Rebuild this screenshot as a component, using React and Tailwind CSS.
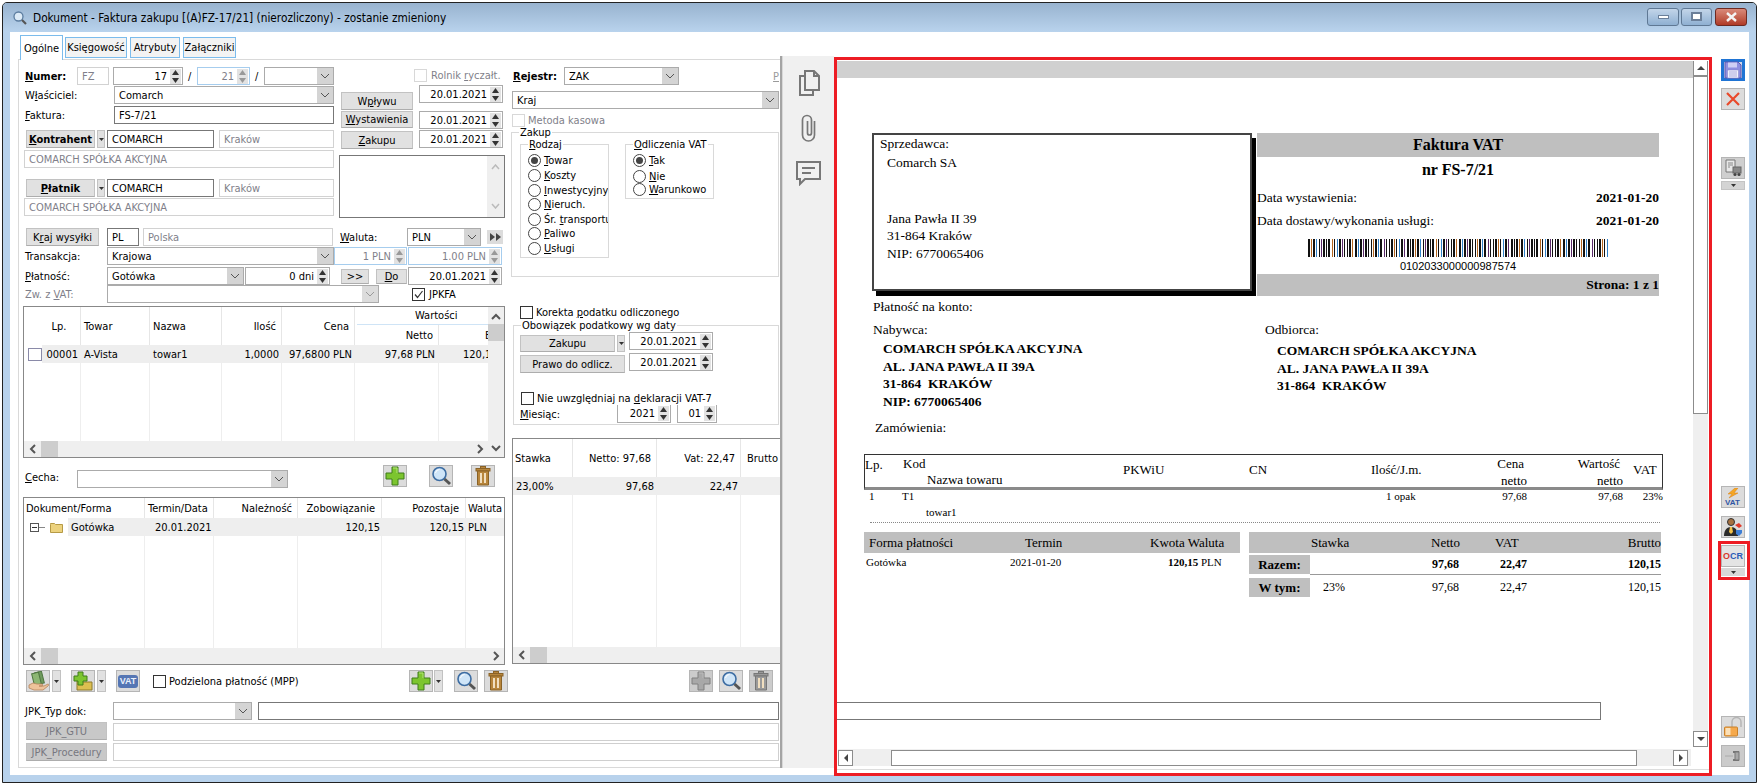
import React from "react";

const cx = (...a) => a.filter(Boolean).join(" ");

function Chev({ dim }) {
  return (
    <svg width="10" height="6" viewBox="0 0 10 6" className="shrink-0">
      <path d="M1 1l4 4 4-4" fill="none" stroke={dim ? "#9a9a9a" : "#555"} strokeWidth="1" />
    </svg>
  );
}
function SpinArrows({ dim }) {
  const c = dim ? "#999" : "#333";
  return (
    <div className="w-[11px] h-[15px] bg-[#e2e2e2] flex flex-col items-center justify-between py-[1px] shrink-0">
      <svg width="7" height="5" viewBox="0 0 7 5"><path d="M3.5 0L7 5H0z" fill={c} /></svg>
      <svg width="7" height="5" viewBox="0 0 7 5"><path d="M3.5 5L7 0H0z" fill={c} /></svg>
    </div>
  );
}
function Box({ className, children, dark, light, blue, right, gray }) {
  const b = dark ? "border-[#777777]" : light ? "border-[#d2d2d2]" : blue ? "border-[#a6cdee]" : "border-[#ababab]";
  return (
    <div className={cx("h-[18px] border bg-white flex items-center px-[4px] shrink-0 overflow-hidden whitespace-nowrap", b, right && "justify-end", gray && "text-[#7f7f8a]", className)}>
      {children}
    </div>
  );
}
function Combo({ className, children, dim }) {
  return (
    <div className={cx("h-[18px] border border-[#ababab] bg-white flex items-center pl-[4px] shrink-0 whitespace-nowrap", className)}>
      <span className="flex-1 overflow-hidden">{children}</span>
      <div className={cx("w-[16px] h-[16px] flex items-center justify-center", dim ? "bg-[#dcdcdc]" : "bg-[#d4d4d4]")}>
        <Chev dim={dim} />
      </div>
    </div>
  );
}
function Spin({ className, children, dim, blue, noTop }) {
  return (
    <div className={cx("h-[18px] border bg-white flex items-center justify-end pr-[1px] shrink-0 whitespace-nowrap", blue ? "border-[#a6cdee]" : "border-[#ababab]", noTop && "border-t-0", dim && "text-[#7f7f8a]", className)}>
      <span className="mr-[3px]">{children}</span>
      <SpinArrows dim={dim} />
    </div>
  );
}
function Btn({ className, children }) {
  return (
    <div className={cx("h-[18px] bg-[#e1e1e1] border border-[#c2c2c2] border-b-[#adadad] flex items-center justify-center shrink-0 whitespace-nowrap", className)}>
      {children}
    </div>
  );
}
function DD({ className }) {
  return (
    <div className={cx("h-[18px] w-[8px] bg-[#e1e1e1] border border-[#c2c2c2] flex items-center justify-center shrink-0", className)}>
      <svg width="5" height="3" viewBox="0 0 5 3"><path d="M0 0h5L2.5 3z" fill="#333" /></svg>
    </div>
  );
}
function Check({ className, on, light }) {
  return (
    <div className={cx("w-[13px] h-[13px] border bg-white flex items-center justify-center shrink-0", light ? "border-[#d8d8d8]" : "border-[#333333]", className)}>
      {on && (
        <svg width="11" height="11" viewBox="0 0 11 11"><path d="M2 5.5l2.5 3L9.5 2" fill="none" stroke="#333" strokeWidth="1.2" /></svg>
      )}
    </div>
  );
}
function Radio({ on, children, className }) {
  return (
    <div className={cx("flex items-center h-[14px] whitespace-nowrap", className)}>
      <div className="w-[13px] h-[13px] rounded-full border border-[#444444] bg-white flex items-center justify-center shrink-0">
        {on && <div className="w-[7px] h-[7px] rounded-full bg-[#444444]" />}
      </div>
      <span className="ml-[3px]">{children}</span>
    </div>
  );
}
function IconBtn({ className, children }) {
  return (
    <div className={cx("w-[24px] h-[22px] bg-[#dcdcdc] border border-[#b5b5b5] flex items-center justify-center shrink-0", className)}>
      {children}
    </div>
  );
}
const Plus = ({ gray }) => (
  <svg width="20" height="20" viewBox="0 0 20 20"><path d="M7 1h6v6h6v6h-6v6H7v-6H1V7h6z" fill={gray ? "#a8a8a8" : "#7cc52f"} stroke={gray ? "#808080" : "#3f7d1a"} strokeWidth="1" /><path d="M8 2h4v5" fill="none" stroke={gray ? "#bbb" : "#b6e67a"} /></svg>
);
const Search = () => (
  <svg width="21" height="20" viewBox="0 0 21 20"><circle cx="8.5" cy="8" r="6.5" fill="#cfe5f8" stroke="#3d6da3" strokeWidth="1.6" /><path d="M4.5 7a4 4 0 0 1 4-3.5" stroke="#fff" fill="none" /><path d="M13.5 13l5.5 5" stroke="#555" strokeWidth="3" /></svg>
);
const Trash = ({ gray }) => {
  const c = gray ? "#9a9a9a" : "#b8863c";
  const d = gray ? "#777" : "#8a6226";
  return (
    <svg width="16" height="20" viewBox="0 0 16 20"><rect x="5.5" y="0.5" width="5" height="2" fill={c} stroke={d} /><rect x="1" y="2.5" width="14" height="2.5" fill={c} stroke={d} /><path d="M2.5 5h11v14h-11z" fill={c} stroke={d} /><path d="M6 7v10M10 7v10" stroke="#f1dfc0" strokeWidth="2" /></svg>
  );
};
const VatBadge = () => (
  <span className="inline-flex items-center justify-center bg-[#5576b4] text-[#eaf0fb] text-[9px] font-bold h-[13px] w-[20px] rounded-[3px] leading-none [font-family:'Liberation_Sans',sans-serif]">VAT</span>
);

function ScrollH({ className, noArrowRight }) {
  return (
    <div className={cx("h-[16px] bg-[#efefef] flex items-center relative shrink-0", className)}>
      <svg width="8" height="10" viewBox="0 0 8 10" className="ml-[5px] shrink-0"><path d="M6 1L2 5l4 4" fill="none" stroke="#555" strokeWidth="2" /></svg>
      <div className="w-[17px] h-[16px] bg-[#cdcdcd] ml-[4px] shrink-0" />
      <div className="flex-1" />
      {!noArrowRight && <svg width="8" height="10" viewBox="0 0 8 10" className="mr-[4px] shrink-0"><path d="M2 1l4 4-4 4" fill="none" stroke="#555" strokeWidth="2" /></svg>}
    </div>
  );
}

function Legend({ className, children }) {
  return <span className={cx("absolute bg-white px-[1px] leading-none whitespace-nowrap", className)}>{children}</span>;
}

function TopLeft() {
  return (
    <div className="h-[168px] pt-[7px] flex">
      <div className="w-[311px] shrink-0">
        <div className="flex items-center h-[18px]">
          <span className="w-[54px] pl-[2px] font-bold shrink-0"><u>N</u>umer:</span>
          <Box light gray className="w-[32px]">FZ</Box>
          <Spin className="w-[70px] ml-[4px]">17</Spin>
          <span className="w-[14px] pl-[5px] shrink-0">/</span>
          <Spin blue dim className="w-[53px]">21</Spin>
          <span className="w-[14px] pl-[5px] shrink-0">/</span>
          <Combo className="w-[70px]"></Combo>
        </div>
        <div className="flex items-center h-[18px] mt-[1px]">
          <span className="w-[91px] pl-[2px] shrink-0">W<u>ł</u>aściciel:</span>
          <Combo className="w-[220px]">Comarch</Combo>
        </div>
        <div className="flex items-center h-[18px] mt-[2px]">
          <span className="w-[91px] pl-[2px] shrink-0"><u>F</u>aktura:</span>
          <Box dark className="w-[220px]">FS-7/21</Box>
        </div>
        <div className="flex items-center h-[18px] mt-[6px] pl-[3px]">
          <Btn className="w-[69px] font-bold"><span><u>K</u>ontrahent</span></Btn>
          <DD className="ml-[2px]" />
          <Box dark className="w-[107px] ml-[2px]">COMARCH</Box>
          <Box light gray className="w-[115px] ml-[5px]">Kraków</Box>
        </div>
        <Box light gray className="w-[310px] ml-[1px] mt-[2px]">COMARCH SPÓŁKA AKCYJNA</Box>
        <div className="flex items-center h-[18px] mt-[11px] pl-[3px]">
          <Btn className="w-[69px] font-bold"><span><u>P</u>łatnik</span></Btn>
          <DD className="ml-[2px]" />
          <Box dark className="w-[107px] ml-[2px]">COMARCH</Box>
          <Box light gray className="w-[115px] ml-[5px]">Kraków</Box>
        </div>
        <Box light gray className="w-[310px] ml-[1px] mt-[1px]">COMARCH SPÓŁKA AKCYJNA</Box>
      </div>
      <div className="w-[166px] ml-[5px] shrink-0">
        <div className="flex items-center h-[14px] mt-[1px] ml-[75px] text-[#7f7f8a] whitespace-nowrap">
          <Check light />
          <span className="ml-[4px]">Rolnik <u>r</u>yczałt.</span>
        </div>
        <div className="flex mt-[3px] ml-[2px]">
          <div className="w-[72px] shrink-0">
            <Btn className="w-full mt-[7px]"><span>W<u>p</u>ływu</span></Btn>
            <Btn className="w-full mt-[1px] !h-[17px]"><span><u>W</u>ystawienia</span></Btn>
            <Btn className="w-full mt-[3px]"><span><u>Z</u>akupu</span></Btn>
          </div>
          <div className="w-[84px] ml-[6px] shrink-0">
            <Spin className="w-full">20.01.2021</Spin>
            <Spin className="w-full mt-[8px]">20.01.2021</Spin>
            <Spin className="w-full mt-[1px]">20.01.2021</Spin>
          </div>
        </div>
        <div className="h-[63px] mt-[6px] border border-[#777777] bg-white flex justify-end">
          <div className="w-[17px] h-full bg-[#efefef] flex flex-col items-center justify-between py-[8px]">
            <svg width="9" height="6" viewBox="0 0 9 6"><path d="M1 5l3.5-4L8 5" fill="none" stroke="#bbb" strokeWidth="1.5" /></svg>
            <svg width="9" height="6" viewBox="0 0 9 6"><path d="M1 1l3.5 4L8 1" fill="none" stroke="#bbb" strokeWidth="1.5" /></svg>
          </div>
        </div>
      </div>
    </div>
  );
}

function FormRows() {
  return (
    <>
      <div className="flex items-center h-[18px]">
        <Btn className="w-[73px] ml-[3px]"><span>K<u>r</u>aj wysyłki</span></Btn>
        <Box dark className="w-[32px] ml-[8px]">PL</Box>
        <Box light gray className="w-[190px] ml-[4px]">Polska</Box>
        <span className="w-[67px] ml-[7px] shrink-0"><u>W</u>aluta:</span>
        <Combo className="w-[74px]">PLN</Combo>
        <div className="w-[16px] h-[14px] ml-[6px] bg-[#dcdcdc] flex items-center justify-center gap-[1px] shrink-0">
          <svg width="5" height="8" viewBox="0 0 5 8"><path d="M0 0l5 4-5 4z" fill="#444" /></svg>
          <svg width="5" height="8" viewBox="0 0 5 8"><path d="M0 0l5 4-5 4z" fill="#444" /></svg>
        </div>
      </div>
      <div className="flex items-center h-[18px] mt-[1px]">
        <span className="w-[84px] pl-[2px] shrink-0">Transakcja:</span>
        <Combo className="w-[227px]">Krajowa</Combo>
        <Spin blue dim className="w-[73px]">1 PLN</Spin>
        <Spin blue dim className="w-[94px] ml-[1px]">1.00 PLN</Spin>
      </div>
      <div className="flex items-center h-[18px] mt-[2px]">
        <span className="w-[84px] pl-[2px] shrink-0"><u>P</u>łatność:</span>
        <Combo className="w-[137px]">Gotówka</Combo>
        <Spin className="w-[85px] ml-[1px]">0 dni</Spin>
        <Btn className="w-[28px] ml-[11px] !h-[15px]">&gt;&gt;</Btn>
        <Btn className="w-[31px] ml-[7px] !h-[15px]"><u>D</u>o</Btn>
        <Spin className="w-[94px] ml-[1px]">20.01.2021</Spin>
      </div>
      <div className="flex items-center h-[18px]">
        <span className="w-[84px] pl-[2px] shrink-0 text-[#7f7f8a]">Zw. z <u>V</u>AT:</span>
        <Combo dim className="w-[272px]"></Combo>
        <Check on className="ml-[33px]" />
        <span className="ml-[4px]">JPKFA</span>
      </div>
    </>
  );
}

function Col({ className, head, cell, headClass, cellClass, rowH, noFillBorder }) {
  return (
    <div className={cx("flex flex-col shrink-0", className)}>
      <div className={cx("flex items-center shrink-0 border-r border-[#e6e6e6] whitespace-nowrap", headClass)}>{head}</div>
      <div className={cx("flex items-center shrink-0 bg-[#eeeeee] whitespace-nowrap", rowH, cellClass)}>{cell}</div>
      <div className={cx("flex-1", !noFillBorder && "border-r border-[#eeeeee]")} />
    </div>
  );
}

function Grid1() {
  const h = "h-[38px]";
  const r = "h-[18px]";
  return (
    <div className="h-[152px] w-[482px] mt-[3px] border border-[#888888] flex bg-white">
      <div className="w-[464px] flex flex-col shrink-0 overflow-hidden">
        <div className="flex flex-1 min-h-0">
          <div className="w-[57px] flex flex-col shrink-0">
            <div className="h-[38px] border-r border-[#e6e6e6] flex items-center justify-center pl-[14px] shrink-0">Lp.</div>
            <div className="h-[18px] flex items-center shrink-0">
              <div className="w-[14px] h-[13px] ml-[4px] border border-[#8a8aa8] bg-white shrink-0" />
              <div className="flex-1 h-full bg-[#eeeeee] flex items-center justify-end pr-[3px]">00001</div>
            </div>
            <div className="flex-1 border-r border-[#eeeeee]" />
          </div>
          <Col className="w-[69px]" head="Towar" cell="A-Vista" headClass={cx(h, "pl-[3px]")} rowH={r} cellClass="pl-[3px]" />
          <Col className="w-[72px]" head="Nazwa" cell="towar1" headClass={cx(h, "pl-[3px]")} rowH={r} cellClass="pl-[3px]" />
          <Col className="w-[60px]" head="Ilość" cell="1,0000" headClass={cx(h, "justify-end pr-[5px]")} rowH={r} cellClass="justify-end pr-[3px]" />
          <Col className="w-[73px]" head="Cena" cell="97,6800 PLN" headClass={cx(h, "justify-end pr-[5px]")} rowH={r} cellClass="justify-end pr-[3px]" />
          <div className="w-[172px] flex flex-col shrink-0">
            <div className="h-[18px] shrink-0 flex items-center ml-[2px] border-b border-[#cfe4f6] pl-[58px] whitespace-nowrap">Wartości</div>
            <div className="flex flex-1">
              <Col className="w-[84px]" head="Netto" cell="97,68 PLN" headClass="h-[20px] justify-end pr-[5px]" rowH={r} cellClass="justify-end pr-[4px]" />
              <Col className="w-[88px]" head="Brutto" cell="120,15 PLN" headClass="h-[20px] pl-[46px] !border-r-0" rowH={r} cellClass="pl-[24px]" noFillBorder />
            </div>
          </div>
        </div>
        <ScrollH />
      </div>
      <div className="w-[16px] bg-[#efefef] flex flex-col items-center shrink-0">
        <svg width="10" height="7" viewBox="0 0 10 7" className="mt-[6px] shrink-0"><path d="M1 6l4-4 4 4" fill="none" stroke="#555" strokeWidth="2" /></svg>
        <div className="w-[16px] h-[17px] bg-[#cdcdcd] mt-[4px] shrink-0" />
        <div className="flex-1" />
        <svg width="10" height="7" viewBox="0 0 10 7" className="mb-[5px] shrink-0"><path d="M1 1l4 4 4-4" fill="none" stroke="#555" strokeWidth="2" /></svg>
      </div>
    </div>
  );
}

function Grid2() {
  const h = "h-[20px]";
  const r = "h-[18px]";
  return (
    <div className="h-[168px] w-[482px] mt-[9px] border border-[#888888] flex flex-col bg-white overflow-hidden">
      <div className="flex flex-1 min-h-0">
        <div className="w-[121px] flex flex-col shrink-0">
          <div className="h-[20px] border-r border-[#e6e6e6] flex items-center pl-[2px] shrink-0">Dokument/Forma</div>
          <div className="h-[18px] flex items-center shrink-0">
            <div className="w-[9px] h-[9px] ml-[6px] border border-[#555555] flex items-center justify-center shrink-0"><div className="w-[5px] h-[1px] bg-[#333333]" /></div>
            <div className="w-[6px] h-[1px] bg-[#888888] shrink-0" />
            <svg width="13" height="11" viewBox="0 0 13 11" className="ml-[5px] shrink-0"><path d="M0.5 2.5V1.5h4l1 1h7v8h-12z" fill="#ecd27e" stroke="#b69a45" /></svg>
            <div className="flex-1 h-full ml-[5px] bg-[#eeeeee] flex items-center pl-[3px]">Gotówka</div>
          </div>
          <div className="flex-1 border-r border-[#eeeeee]" />
        </div>
        <Col className="w-[69px]" head="Termin/Data" cell="20.01.2021" headClass={cx(h, "pl-[3px]")} rowH={r} cellClass="pl-[10px]" />
        <Col className="w-[84px]" head="Należność" cell="" headClass={cx(h, "justify-end pr-[5px]")} rowH={r} />
        <Col className="w-[84px]" head="Zobowiązanie" cell="120,15" headClass={cx(h, "justify-end pr-[6px]")} rowH={r} cellClass="justify-end pr-[2px]" />
        <Col className="w-[84px]" head="Pozostaje" cell="120,15" headClass={cx(h, "justify-end pr-[6px]")} rowH={r} cellClass="justify-end pr-[2px]" />
        <Col className="w-[40px]" head="Waluta" cell="PLN" headClass={cx(h, "pl-[2px] !border-r-0")} rowH={r} cellClass="pl-[2px]" noFillBorder />
      </div>
      <ScrollH />
    </div>
  );
}

function Grid3() {
  const h = "h-[38px]";
  const r = "h-[18px]";
  return (
    <div className="h-[226px] w-[268px] ml-[1px] mt-[13px] border border-r-0 border-[#888888] flex flex-col bg-white overflow-hidden">
      <div className="flex flex-1 min-h-0">
        <Col className="w-[60px]" head="Stawka" cell="23,00%" headClass={cx(h, "pl-[2px]")} rowH={r} cellClass="pl-[3px]" />
        <Col className="w-[84px]" head="Netto: 97,68" cell="97,68" headClass={cx(h, "justify-end pr-[5px]")} rowH={r} cellClass="justify-end pr-[3px]" />
        <Col className="w-[84px]" head="Vat: 22,47" cell="22,47" headClass={cx(h, "justify-end pr-[5px]")} rowH={r} cellClass="justify-end pr-[3px]" />
        <Col className="w-[40px]" head="Brutto" cell="" headClass={cx(h, "pl-[6px] !border-r-0")} rowH={r} noFillBorder />
      </div>
      <ScrollH noArrowRight />
    </div>
  );
}

function ColA() {
  return (
    <div className="w-[482px] shrink-0">
      <TopLeft />
      <FormRows />
      <Grid1 />
      <div className="flex items-start h-[23px] mt-[7px]">
        <span className="w-[54px] pl-[2px] shrink-0 mt-[7px]"><u>C</u>echa:</span>
        <Combo className="w-[211px] mt-[5px]"></Combo>
        <IconBtn className="ml-[95px]"><Plus /></IconBtn>
        <IconBtn className="ml-[22px]"><Search /></IconBtn>
        <IconBtn className="ml-[18px]"><Trash /></IconBtn>
      </div>
      <Grid2 />
      <div className="flex items-center h-[22px] mt-[5px]">
        <IconBtn className="ml-[3px]">
          <svg width="21" height="20" viewBox="0 0 21 20"><rect x="8" y="1" width="7" height="12" transform="rotate(-14 11 7)" fill="#6f9a5c" stroke="#4f7540" /><rect x="5" y="2" width="7" height="12" transform="rotate(-14 8 8)" fill="#8db673" stroke="#4f7540" /><path d="M1 14l4-2 4 1h5c1 0 1 2 0 2h-3l5 0 4-2c1 0 1 1 0 2l-5 4H6l-5-2z" fill="#eec39a" stroke="#b5835a" strokeWidth=".8" /></svg>
        </IconBtn>
        <DD className="ml-[2px] !w-[9px] !h-[22px]" />
        <IconBtn className="ml-[10px]">
          <svg width="20" height="20" viewBox="0 0 20 20"><path d="M4 9h4l2 2h9v8H4z" fill="#dcbf50" stroke="#8e7a2a" /><path d="M5 1h5v4h4v5h-4v4H5v-4H1V5h4z" fill="#7cc52f" stroke="#3f7d1a" /></svg>
        </IconBtn>
        <DD className="ml-[2px] !w-[9px] !h-[22px]" />
        <IconBtn className="ml-[10px]"><VatBadge /></IconBtn>
        <Check className="ml-[13px]" />
        <span className="w-[126px] ml-[3px] shrink-0 whitespace-nowrap">Podzielona płatność (MPP)</span>
        <IconBtn className="ml-[114px]"><Plus /></IconBtn>
        <DD className="ml-[1px] !w-[9px] !h-[22px]" />
        <IconBtn className="ml-[11px]"><Search /></IconBtn>
        <IconBtn className="ml-[6px]"><Trash /></IconBtn>
      </div>
    </div>
  );
}

function Group({ className, legend, legendClass, children }) {
  return (
    <div className={cx("relative border border-[#d9d9d9] bg-white", className)}>
      <Legend className={legendClass}>{legend}</Legend>
      {children}
    </div>
  );
}

function ColB() {
  return (
    <div className="w-[268px] ml-[6px] shrink-0">
      <div className="flex items-center h-[18px] mt-[7px]">
        <span className="w-[53px] pl-[2px] font-bold shrink-0"><u>R</u>ejestr:</span>
        <Combo className="w-[115px]">ZAK</Combo>
        <span className="ml-auto text-[#9a9a9a] underline">P</span>
      </div>
      <Combo className="w-[267px] ml-[1px] mt-[6px]">Kraj</Combo>
      <div className="flex items-center h-[14px] mt-[4px] ml-[1px] text-[#7f7f8a]">
        <Check light />
        <span className="ml-[3px]">Metoda kasowa</span>
      </div>
      <Group className="w-[268px] h-[145px] mt-[5px] flex items-start" legend="Zakup" legendClass="left-[7px] -top-[6px]">
        <Group className="w-[89px] h-[114px] ml-[8px] mt-[11px]" legend={<span><u>R</u>odzaj</span>} legendClass="left-[7px] -top-[6px]">
          <div className="pt-[8px] pl-[7px] overflow-hidden w-[87px]">
            <Radio on><u>T</u>owar</Radio>
            <Radio className="mt-[1px]"><u>K</u>oszty</Radio>
            <Radio className="mt-[1px]"><u>I</u>nwestycyjny</Radio>
            <Radio><u>N</u>ieruch.</Radio>
            <Radio className="mt-[1px]">Śr. <u>t</u>ransportu</Radio>
            <Radio><u>P</u>aliwo</Radio>
            <Radio className="mt-[1px]"><u>U</u>sługi</Radio>
          </div>
        </Group>
        <Group className="w-[89px] h-[55px] ml-[16px] mt-[11px]" legend={<span><u>O</u>dliczenia VAT</span>} legendClass="left-[7px] -top-[6px]">
          <div className="pt-[8px] pl-[7px]">
            <Radio on><u>T</u>ak</Radio>
            <Radio className="mt-[2px]"><u>N</u>ie</Radio>
            <Radio className="-mt-[1px]"><u>W</u>arunkowo</Radio>
          </div>
        </Group>
      </Group>
      <div className="flex items-center h-[13px] mt-[29px] ml-[9px]">
        <Check />
        <span className="ml-[3px]">Korekta <u>p</u>odatku odliczonego</span>
      </div>
      <Group className="w-[266px] h-[100px] ml-[2px] mt-[6px]" legend="Obowiązek podatkowy wg daty" legendClass="left-[7px] -top-[6px]">
        <div className="flex items-start mt-[6px] ml-[6px] h-[20px]">
          <Btn className="w-[95px] mt-[3px] !h-[17px]">Zakupu</Btn>
          <DD className="ml-[2px] mt-[3px] !h-[17px]" />
          <Spin className="w-[84px] ml-[4px]">20.01.2021</Spin>
        </div>
        <div className="flex items-start mt-[1px] ml-[6px] h-[20px]">
          <Btn className="w-[105px] mt-[2px]">Prawo do odlicz.</Btn>
          <Spin className="w-[84px] ml-[4px]">20.01.2021</Spin>
        </div>
        <div className="flex items-center h-[13px] mt-[19px] ml-[7px]">
          <Check />
          <span className="ml-[3px]">Nie uwzględniaj na <u>d</u>eklaracji VAT-7</span>
        </div>
        <div className="flex items-center h-[18px] ml-[6px]">
          <span className="w-[97px] shrink-0"><u>M</u>iesiąc:</span>
          <Spin noTop className="w-[54px]">2021</Spin>
          <Spin noTop className="w-[40px] ml-[6px]">01</Spin>
        </div>
      </Group>
      <Grid3 />
      <div className="flex items-center h-[22px] mt-[6px] ml-[178px]">
        <IconBtn className="!bg-[#cccccc]"><Plus gray /></IconBtn>
        <IconBtn className="ml-[6px]"><Search /></IconBtn>
        <IconBtn className="ml-[6px] !bg-[#cccccc]"><Trash gray /></IconBtn>
      </div>
    </div>
  );
}

function JpkRows() {
  return (
    <div className="mt-[10px]">
      <div className="flex items-center h-[18px]">
        <span className="w-[90px] pl-[2px] shrink-0">JPK_Typ dok:</span>
        <Combo className="w-[139px]"></Combo>
        <Box dark className="w-[521px] ml-[6px]"></Box>
      </div>
      <div className="flex items-start h-[19px] mt-[2px]">
        <Btn className="w-[81px] ml-[3px] !bg-[#c8c8c8] text-[#77777f]">JPK_GTU</Btn>
        <Box className="w-[666px] ml-[6px] mt-[1px] !border-[#cfcfcf]"></Box>
      </div>
      <div className="flex items-start h-[18px] mt-[2px]">
        <Btn className="w-[81px] ml-[3px] !bg-[#c8c8c8] text-[#77777f]">JPK_Procedury</Btn>
        <Box className="w-[666px] ml-[6px] !border-[#cfcfcf]"></Box>
      </div>
    </div>
  );
}

function LeftSide() {
  return (
    <div className="w-[762px] shrink-0 flex flex-col pt-[3px]">
      <div className="flex items-end h-[24px] pl-[2px]">
        <div className="w-[43px] h-[25px] border border-b-0 border-[#7cbcec] bg-white flex items-center justify-center -mb-[1px] z-10 shrink-0">Ogólne</div>
        <div className="w-[62px] h-[21px] border border-[#7cbcec] bg-[#f3f3f3] flex items-center justify-center ml-[2px] mb-[1px] shrink-0">Księgowość</div>
        <div className="w-[50px] h-[21px] border border-[#7cbcec] bg-[#f3f3f3] flex items-center justify-center ml-[3px] mb-[1px] shrink-0">Atrybuty</div>
        <div className="w-[53px] h-[21px] border border-[#7cbcec] bg-[#f3f3f3] flex items-center justify-center ml-[3px] mb-[1px] shrink-0">Załączniki</div>
      </div>
      <div className="h-[709px] border-l border-t border-b border-[#d9d9d9] pl-[4px]">
        <div className="flex h-[632px]">
          <ColA />
          <ColB />
        </div>
        <JpkRows />
      </div>
    </div>
  );
}

function Barcode() {
  const pattern = [2,1,1,1,2,1,1,2,1,1,1,1,2,1,1,1,2,2,1,1,1,2,1,1,2,1,1,1,1,2,1,1,2,1,1,2,2,1,1,1];
  const colors = ["#111111", "#b5651d", "#111111", "#2f80c8", "#111111", "#5a2a6a", "#111111", "#111111"];
  const bars = [];
  let x = 0;
  let i = 0;
  while (x < 300) {
    const w = pattern[i % pattern.length];
    if (i % 2 === 0) bars.push(<rect key={i} x={x} y="0" width={w} height="18" fill={colors[(i / 2) % colors.length]} />);
    x += w;
    i++;
  }
  return <svg width="300" height="18" viewBox="0 0 300 18" className="mx-auto mt-[9px] block">{bars}</svg>;
}

function DocTop() {
  return (
    <div className="flex pt-[55px]">
      <div className="w-[380px] h-[158px] ml-[35px] border-2 border-[#444444] bg-white shadow-[4px_5px_0_#000] shrink-0 text-[13.5px]">
        <div className="h-[18px] pl-[6px] flex items-center">Sprzedawca:</div>
        <div className="h-[18px] pl-[13px] mt-[1px] flex items-center">Comarch SA</div>
        <div className="h-[17px] pl-[13px] mt-[38px] flex items-center">Jana Pawła II 39</div>
        <div className="h-[17px] pl-[13px] flex items-center">31-864 Kraków</div>
        <div className="h-[17px] pl-[13px] mt-[1px] flex items-center">NIP: 6770065406</div>
      </div>
      <div className="w-[402px] ml-[5px] shrink-0">
        <div className="h-[24px] bg-[#bfbfbf] flex items-center justify-center font-bold text-[16px]">Faktura VAT</div>
        <div className="h-[20px] mt-[3px] flex items-center justify-center font-bold text-[16px]">nr FS-7/21</div>
        <div className="h-[18px] mt-[9px] flex items-center justify-between text-[13.5px]"><span>Data wystawienia:</span><b>2021-01-20</b></div>
        <div className="h-[18px] mt-[5px] flex items-center justify-between text-[13.5px]"><span>Data dostawy/wykonania usługi:</span><b>2021-01-20</b></div>
        <Barcode />
        <div className="h-[14px] mt-[2px] flex items-center justify-center text-[11px] [font-family:'Liberation_Sans',sans-serif]">0102033000000987574</div>
        <div className="h-[22px] mt-[1px] bg-[#bfbfbf] flex items-center justify-end font-bold text-[13.5px]">Strona: 1 z 1</div>
      </div>
    </div>
  );
}

function DocParties() {
  return (
    <div className="text-[13.5px]">
      <div className="h-[18px] mt-[2px] ml-[36px] flex items-center">Płatność na konto:</div>
      <div className="flex mt-[5px]">
        <div className="w-[392px] ml-[36px] shrink-0">
          <div className="h-[18px] flex items-center">Nabywca:</div>
          <div className="pl-[10px] mt-[1px] font-bold">
            <div className="h-[17.5px] flex items-center">COMARCH SPÓŁKA AKCYJNA</div>
            <div className="h-[17.5px] flex items-center">AL. JANA PAWŁA II 39A</div>
            <div className="h-[17.5px] flex items-center whitespace-pre">31-864  KRAKÓW</div>
            <div className="h-[18px] flex items-center">NIP: 6770065406</div>
          </div>
        </div>
        <div className="shrink-0">
          <div className="h-[18px] flex items-center">Odbiorca:</div>
          <div className="pl-[12px] mt-[3px] font-bold">
            <div className="h-[17.5px] flex items-center">COMARCH SPÓŁKA AKCYJNA</div>
            <div className="h-[17.5px] flex items-center">AL. JANA PAWŁA II 39A</div>
            <div className="h-[17.5px] flex items-center whitespace-pre">31-864  KRAKÓW</div>
          </div>
        </div>
      </div>
      <div className="h-[18px] mt-[8px] ml-[38px] flex items-center">Zamówienia:</div>
    </div>
  );
}

function DocTable() {
  return (
    <div className="ml-[27px] w-[799px]">
      <div className="h-[36px] mt-[17px] border border-[#333333] border-b-[3px] border-b-[#8a8a8a] flex text-[13px] whitespace-nowrap">
        <div className="w-[38px] pt-[3px] shrink-0">Lp.</div>
        <div className="w-[220px] shrink-0">
          <div className="h-[18px] flex items-center">Kod</div>
          <div className="h-[14px] flex items-center pl-[24px]">Nazwa towaru</div>
        </div>
        <div className="w-[126px] pt-[8px] shrink-0">PKWiU</div>
        <div className="w-[122px] pt-[8px] shrink-0">CN</div>
        <div className="w-[110px] pt-[8px] shrink-0">Ilość/J.m.</div>
        <div className="w-[46px] text-right shrink-0">
          <div className="h-[18px] flex items-center justify-end pr-[3px]">Cena</div>
          <div className="h-[15px] flex items-center justify-end">netto</div>
        </div>
        <div className="w-[96px] text-right shrink-0">
          <div className="h-[18px] flex items-center justify-end pr-[3px]">Wartość</div>
          <div className="h-[15px] flex items-center justify-end">netto</div>
        </div>
        <div className="pt-[8px] pl-[10px] shrink-0">VAT</div>
      </div>
      <div className="h-[14px] flex items-center text-[11px] whitespace-nowrap">
        <div className="w-[38px] pl-[5px] shrink-0">1</div>
        <div className="w-[358px] shrink-0">T1</div>
        <div className="w-[223px] pl-[126px] shrink-0">1 opak</div>
        <div className="w-[44px] text-right shrink-0">97,68</div>
        <div className="w-[96px] text-right shrink-0">97,68</div>
        <div className="flex-1 text-right">23%</div>
      </div>
      <div className="h-[14px] mt-[2px] flex items-center pl-[62px] text-[11px]">towar1</div>
      <div className="w-[790px] ml-[6px] mt-[2px] border-t border-dotted border-[#888888]" />
    </div>
  );
}

function DocBottom() {
  return (
    <div className="flex ml-[27px] mt-[9px] whitespace-nowrap">
      <div className="w-[376px] shrink-0">
        <div className="h-[21px] bg-[#bfbfbf] flex items-center text-[13px]">
          <span className="w-[161px] pl-[5px] shrink-0">Forma płatności</span>
          <span className="w-[125px] shrink-0">Termin</span>
          <span>Kwota Waluta</span>
        </div>
        <div className="h-[14px] mt-[3px] flex items-center text-[11px]">
          <span className="w-[146px] pl-[2px] shrink-0">Gotówka</span>
          <span className="w-[158px] shrink-0">2021-01-20</span>
          <span><b>120,15</b> PLN</span>
        </div>
      </div>
      <div className="w-[412px] ml-[9px] shrink-0 text-[13px]">
        <div className="h-[21px] bg-[#bfbfbf] flex items-center">
          <span className="w-[182px] pl-[62px] shrink-0">Stawka</span>
          <span className="w-[64px] shrink-0">Netto</span>
          <span className="flex-1">VAT</span>
          <span>Brutto</span>
        </div>
        <div className="flex h-[20px] mt-[2px] font-bold text-[12px]">
          <div className="w-[61px] h-[19px] bg-[#bfbfbf] flex items-center justify-center shrink-0 text-[13px]">Razem:</div>
          <div className="flex-1 flex items-center border-b border-[#999999]">
            <span className="w-[149px] text-right shrink-0">97,68</span>
            <span className="w-[68px] text-right shrink-0">22,47</span>
            <span className="flex-1 text-right">120,15</span>
          </div>
        </div>
        <div className="flex h-[19px] mt-[3px] text-[12px]">
          <div className="w-[61px] bg-[#bfbfbf] flex items-center justify-center font-bold shrink-0 text-[13px]">W tym:</div>
          <div className="flex-1 flex items-center">
            <span className="w-[35px] text-right shrink-0">23%</span>
            <span className="w-[114px] text-right shrink-0">97,68</span>
            <span className="w-[68px] text-right shrink-0">22,47</span>
            <span className="flex-1 text-right">120,15</span>
          </div>
        </div>
      </div>
    </div>
  );
}

function ScrollBtn({ children, className }) {
  return <div className={cx("w-[15px] h-[16px] bg-white border border-[#8c8c8c] flex items-center justify-center shrink-0", className)}>{children}</div>;
}

function Viewer() {
  return (
    <div className="w-[878px] h-[719px] mt-[25px] border-[3px] border-[#ed1c24] shrink-0 relative overflow-hidden bg-white flex flex-col">
      <div className="flex h-[686px] shrink-0">
        <div className="w-[856px] h-full shrink-0 overflow-hidden [font-family:'Liberation_Serif',serif] text-[13.5px] leading-none text-black">
          <div className="h-[17px] mt-[1px] bg-[#d0d0d0]" />
          <DocTop />
          <DocParties />
          <DocTable />
          <DocBottom />
        </div>
        <div className="w-[15px] h-full mt-[1px] flex flex-col bg-[#efefef] shrink-0">
          <ScrollBtn className="border-t-0 border-b-2"><svg width="8" height="4" viewBox="0 0 8 4"><path d="M4 0l4 4H0z" fill="#444" /></svg></ScrollBtn>
          <div className="h-[337px] bg-white border-x border-b border-[#8c8c8c] shrink-0" />
          <div className="flex-1" />
          <ScrollBtn><svg width="8" height="4" viewBox="0 0 8 4"><path d="M4 4l4-4H0z" fill="#444" /></svg></ScrollBtn>
        </div>
      </div>
      <div className="h-[17px] mt-[3px] ml-[1px] w-[853px] bg-[#efefef] flex items-center shrink-0">
        <ScrollBtn><svg width="4" height="8" viewBox="0 0 4 8"><path d="M0 4l4-4v8z" fill="#444" /></svg></ScrollBtn>
        <div className="w-[38px] shrink-0" />
        <div className="w-[746px] h-[16px] bg-white border border-[#8c8c8c] shrink-0" />
        <div className="w-[36px] shrink-0" />
        <ScrollBtn><svg width="4" height="8" viewBox="0 0 4 8"><path d="M4 4L0 0v8z" fill="#444" /></svg></ScrollBtn>
      </div>
      <div className="mt-[3px] h-[1px] bg-[#dddddd]" />
      <div className="absolute left-0 top-[642px] w-[764px] h-[18px] border border-l-0 border-[#777777] bg-white" />
    </div>
  );
}

function Rail() {
  return (
    <div className="w-[37px] shrink-0 flex flex-col pl-[9px]">
      <IconBtn className="mt-[27px] !border-[3px] !border-[#1f74d4] !bg-[#cfd3e6]">
        <svg width="18" height="18" viewBox="0 0 18 18"><path d="M1 1h13l3 3v13H1z" fill="#8f8fe0" stroke="#5a5ab0" /><rect x="4" y="1.5" width="9" height="5" fill="#cfcff5" /><rect x="3.5" y="9" width="11" height="8" fill="#f2f2fc" stroke="#8888cc" strokeWidth=".6" /><path d="M5 11h8M5 13h8M5 15h8" stroke="#aaaadd" /></svg>
      </IconBtn>
      <IconBtn className="mt-[7px]">
        <svg width="16" height="16" viewBox="0 0 16 16"><path d="M2 2l12 12M14 2L2 14" stroke="#e9492a" strokeWidth="2.2" /></svg>
      </IconBtn>
      <IconBtn className="mt-[47px] !bg-[#cfcfcf]">
        <svg width="18" height="18" viewBox="0 0 18 18"><path d="M2 1h9v12H2z" fill="#e8e8e8" stroke="#777" /><path d="M4 4h5M4 6h5M4 8h2" stroke="#888" /><rect x="9" y="8" width="8" height="6" fill="#888" stroke="#666" /><circle cx="11" cy="15.5" r="1.6" fill="#444" /><circle cx="15" cy="15.5" r="1.6" fill="#444" /></svg>
      </IconBtn>
      <div className="w-[24px] h-[9px] mt-[2px] bg-[#d4d4d4] border border-[#c4c4c4] flex items-center justify-center">
        <svg width="5" height="3" viewBox="0 0 5 3"><path d="M0 0h5L2.5 3z" fill="#333" /></svg>
      </div>
      <IconBtn className="mt-[296px] relative">
        <svg width="20" height="18" viewBox="0 0 20 18"><path d="M12 0L5 6h4L6 10l9-5h-4l4-5z" fill="#f5a623" stroke="#d9801a" strokeWidth=".5" /><text x="2" y="17" fontSize="8" fontWeight="bold" fill="#2f55a4" fontFamily="Liberation Sans">VAT</text></svg>
      </IconBtn>
      <IconBtn className="mt-[8px]">
        <svg width="20" height="20" viewBox="0 0 20 20"><circle cx="8" cy="5" r="3.5" fill="#a5703f" stroke="#333" /><path d="M1 19c0-6 3-9 7-9s7 3 7 9z" fill="#2b2b2b" /><path d="M7 10h2l1 5-2 2-2-2z" fill="#f2c14a" /><path d="M12 8l4-2 3 3-3 2z" fill="#e23a2a" /><path d="M13 13h6v3l-3 3-3-2z" fill="#3d7fd6" /></svg>
      </IconBtn>
      <div className="w-[32px] h-[39px] mt-[3px] -ml-[3px] border-[3px] border-[#ed1c24] shrink-0 flex flex-col pt-[1px]">
        <IconBtn className="!h-[22px] !w-[24px] !bg-[#e4e4e4]">
          <div className="leading-none text-center [font-family:'Liberation_Sans',sans-serif] font-bold text-[9px] text-[#2a5bb8]"><span className="text-[#d63a2a]">O</span><span>CR</span></div>
        </IconBtn>
        <div className="w-[24px] h-[8px] mt-[1px] bg-[#d8d8d8] flex items-center justify-center">
          <svg width="5" height="3" viewBox="0 0 5 3"><path d="M0 0h5L2.5 3z" fill="#333" /></svg>
        </div>
      </div>
      <IconBtn className="mt-[136px]">
        <svg width="20" height="20" viewBox="0 0 20 20"><path d="M9 10V5a4.5 4.5 0 0 1 9 0v5" fill="none" stroke="#b5b5b5" strokeWidth="1.5" /><rect x="1.5" y="10" width="13" height="9" rx="1" fill="#f5a94d" stroke="#c9812a" /><rect x="2.5" y="11" width="5" height="7" fill="#fbe0b8" /></svg>
      </IconBtn>
      <IconBtn className="mt-[7px] !bg-[#cbcbcb]">
        <svg width="18" height="14" viewBox="0 0 18 14"><path d="M1 7h8" stroke="#aaa" /><path d="M9 3h6M9 11h6" stroke="#777" strokeWidth="2" /><rect x="11" y="3" width="4" height="8" fill="#a8a8a8" stroke="#777" /></svg>
      </IconBtn>
    </div>
  );
}

function WinBtn({ className, children }) {
  return <div className={cx("w-[32px] h-[18px] rounded-[3px] border border-[#5f7894] flex items-center justify-center shrink-0", className)}>{children}</div>;
}

export default function App() {
  return (
    <div className="w-[1758px] h-[784px] bg-white overflow-hidden pt-[2px] pl-[2px] text-[11px] leading-none text-black [font-family:'DejaVu_Sans_Condensed','DejaVu_Sans',sans-serif]">
      <div className="w-[1755px] h-[781px] border border-[#222222] rounded-t-[5px] bg-[#b8d2ec] overflow-hidden">
        <div className="h-[29px] flex items-center bg-gradient-to-b from-[#98b3cf] to-[#b9d3ed]">
          <svg width="14" height="14" viewBox="0 0 14 14" className="ml-[10px] shrink-0"><circle cx="5.5" cy="5.5" r="4.5" fill="#dceaf6" stroke="#5c7da0" strokeWidth="1.3" /><path d="M9 9l4 4" stroke="#555" strokeWidth="2.2" /></svg>
          <span className="ml-[6px] mt-[3px] text-[11.75px] whitespace-nowrap">Dokument - Faktura zakupu [(A)FZ-17/21] (nierozliczony) - zostanie zmieniony</span>
          <div className="ml-auto mr-[9px] mt-[-2px] flex gap-[2px]">
            <WinBtn className="bg-gradient-to-b from-[#c3d5e9] to-[#8fb0d2]"><div className="w-[11px] h-[4px] bg-white border border-[#6b7f99]" /></WinBtn>
            <WinBtn className="bg-gradient-to-b from-[#c3d5e9] to-[#8fb0d2] !w-[31px]"><div className="w-[11px] h-[9px] border-2 border-[#6b7f99] bg-white" /></WinBtn>
            <WinBtn className="bg-gradient-to-b from-[#d98a7a] to-[#b03a26] !border-[#6d2a22] ml-[1px]">
              <svg width="13" height="10" viewBox="0 0 13 10"><path d="M2 1l9 8M11 1l-9 8" stroke="#f4f4f4" strokeWidth="2.4" /></svg>
            </WinBtn>
          </div>
        </div>
        <div className="ml-[7px] w-[1739px] h-[743px] bg-white flex pl-[8px]">
          <LeftSide />
          <div className="w-[3px] h-[712px] mt-[24px] bg-[#a4a4a4] border-r border-[#d8d8d8] shrink-0" />
          <div className="w-[51px] h-[712px] mt-[24px] bg-[#f0f0f0] flex flex-col items-center shrink-0">
            <svg width="22" height="26" viewBox="0 0 22 26" className="mt-[14px] shrink-0"><path d="M7 1h9l5 5v14H7z" fill="none" stroke="#777" strokeWidth="2" /><path d="M16 1v5h5" fill="none" stroke="#777" strokeWidth="2" /><path d="M7 6H2v19h13v-5" fill="none" stroke="#777" strokeWidth="2" /></svg>
            <svg width="16" height="29" viewBox="0 0 16 29" className="mt-[17px] shrink-0"><path d="M13.5 8v14a6 6 0 0 1-12 0V7a4.5 4.5 0 0 1 9 0v13a2 2 0 0 1-4 0V8" fill="none" stroke="#777" strokeWidth="1.7" /></svg>
            <svg width="25" height="25" viewBox="0 0 25 25" className="mt-[19px] shrink-0"><path d="M1 1h23v17H9l-5 5v-5H1z" fill="none" stroke="#777" strokeWidth="2" /><path d="M6 7h13M6 12h9" stroke="#777" strokeWidth="2" /></svg>
          </div>
          <Viewer />
          <Rail />
        </div>
      </div>
    </div>
  );
}
